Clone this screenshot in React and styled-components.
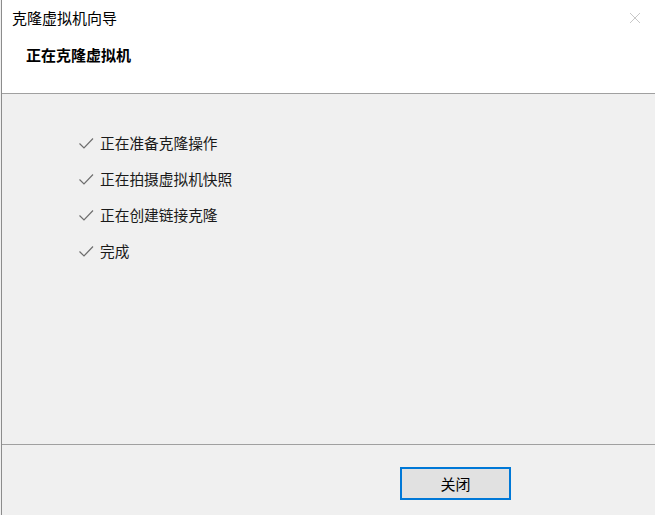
import React from "react";
import styled, { createGlobalStyle } from "styled-components";

const Global = createGlobalStyle`
  html, body { margin: 0; padding: 0; background: #f0f0f0; }
  body { font-family: "Noto Sans CJK SC", "Microsoft YaHei", sans-serif; color: #000; }
`;

const Frame = styled.div`
  width: 655px;
  height: 515px;
  padding-left: 1px;
  box-sizing: border-box;
  background: #f0f0f0;
  overflow: hidden;
`;

const Window = styled.div`
  height: 100%;
  border-left: 1px solid #8c8c8c;
  display: flex;
  flex-direction: column;
`;

const Header = styled.div`
  height: 94px;
  box-sizing: border-box;
  background: #ffffff;
  border-bottom: 1px solid #a0a0a0;
  display: flex;
  flex-direction: column;
`;

const TitleBar = styled.div`
  display: flex;
  align-items: center;
  justify-content: space-between;
  padding: 8px 14px 0 10px;
  height: 20px;
`;

const Title = styled.div`
  font-size: 15px;
  line-height: 20px;
`;

const Close = styled.div`
  width: 12px;
  height: 12px;
  display: flex;
`;

const Subtitle = styled.div`
  margin: 17px 0 0 24px;
  font-size: 15px;
  line-height: 20px;
  font-weight: 700;
`;

const Body = styled.div`
  flex: 1;
  padding: 31px 0 0 76px;
  display: flex;
  flex-direction: column;
`;

const Item = styled.div`
  height: 36px;
  display: flex;
  align-items: center;
  gap: 6px;
  font-size: 14.7px;
  line-height: 20px;
  color: #1a1a1a;
`;

const Footer = styled.div`
  height: 71px;
  box-sizing: border-box;
  border-top: 1px solid #a0a0a0;
  display: flex;
  justify-content: flex-end;
  align-items: flex-start;
  padding: 22px 144px 0 0;
`;

const Button = styled.button`
  width: 111px;
  height: 33px;
  box-sizing: border-box;
  background: #e1e1e1;
  border: 2px solid #0078d7;
  font-family: inherit;
  font-size: 15px;
  color: #000;
  padding: 0;
  cursor: default;
`;

const Check = () => (
  <svg width="16" height="13" viewBox="0 0 16 13">
    <polyline points="1.5,6.5 6,11 15,1.5" fill="none" stroke="#6e6e6e" strokeWidth="1.2" />
  </svg>
);

const steps = ["正在准备克隆操作", "正在拍摄虚拟机快照", "正在创建链接克隆", "完成"];

export default function App() {
  return (
    <Frame>
      <Global />
      <Window>
        <Header>
          <TitleBar>
            <Title>克隆虚拟机向导</Title>
            <Close>
              <svg width="12" height="12" viewBox="0 0 12 12">
                <path d="M1 1 L11 11 M11 1 L1 11" stroke="#c8c8c8" strokeWidth="1" fill="none" />
              </svg>
            </Close>
          </TitleBar>
          <Subtitle>正在克隆虚拟机</Subtitle>
        </Header>
        <Body>
          {steps.map((s) => (
            <Item key={s}>
              <Check />
              <span>{s}</span>
            </Item>
          ))}
        </Body>
        <Footer>
          <Button>关闭</Button>
        </Footer>
      </Window>
    </Frame>
  );
}
